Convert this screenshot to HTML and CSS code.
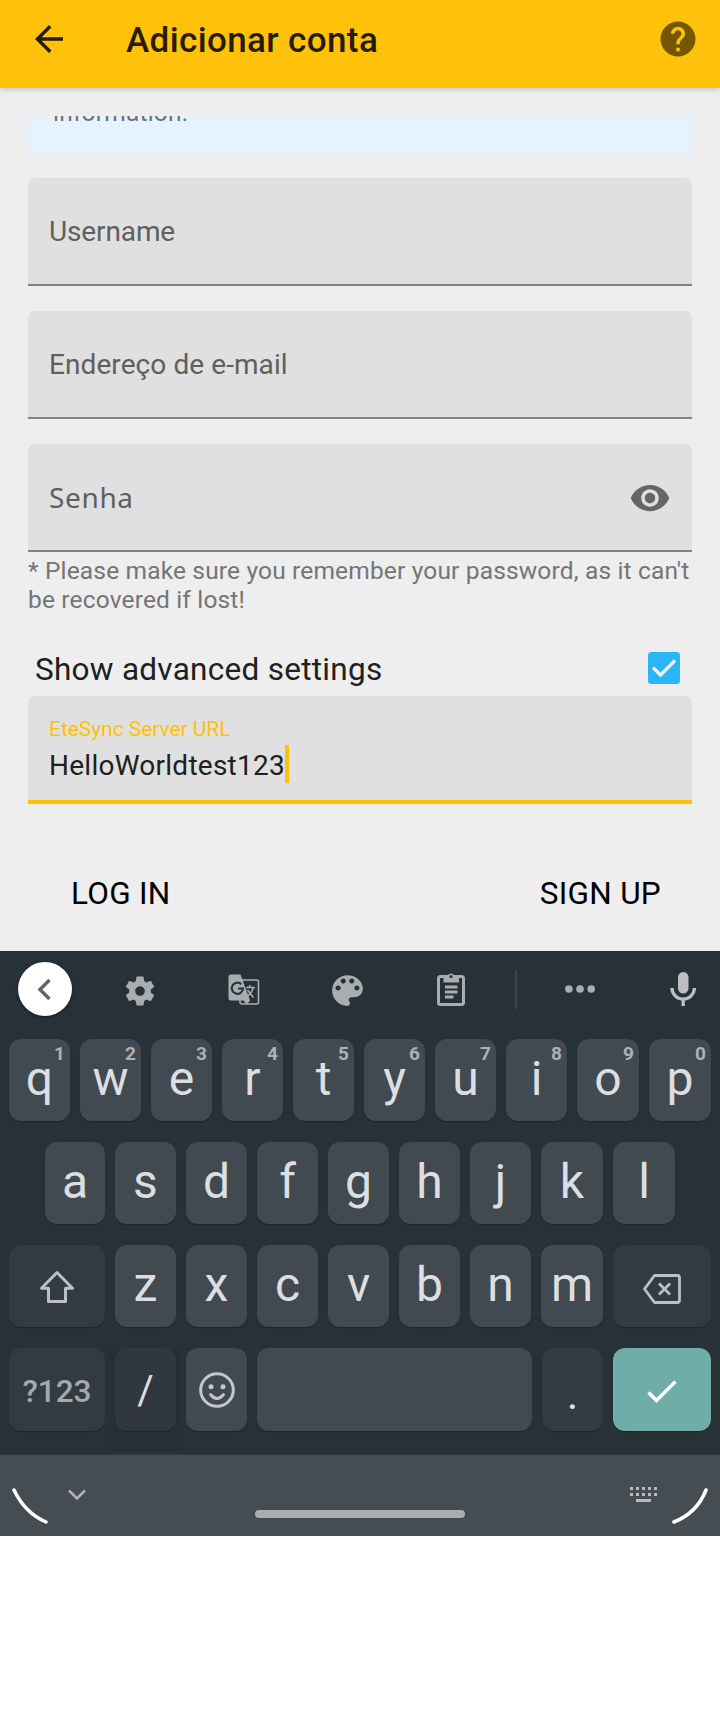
FILE: index.html
```html
<!DOCTYPE html>
<html lang="pt">
<head>
<meta charset="utf-8">
<title>Adicionar conta</title>
<link rel="stylesheet" href="styles.css">
</head>
<body>
<header class="appbar">
  <svg class="back" viewBox="0 0 24 24"><path d="M20 11H7.83l5.59-5.59L12 4l-8 8 8 8 1.41-1.41L7.83 13H20v-2z"/></svg>
  <h1 class="title">Adicionar conta</h1>
  <svg class="help" viewBox="0 0 24 24"><path d="M12 2C6.48 2 2 6.48 2 12s4.48 10 10 10 10-4.48 10-10S17.52 2 12 2zm1 17h-2v-2h2v2zm2.07-7.75l-.9.92C13.45 12.9 13 13.5 13 15h-2v-.5c0-1.1.45-2.1 1.17-2.83l1.24-1.26c.37-.36.59-.86.59-1.41 0-1.1-.9-2-2-2s-2 .9-2 2H8c0-2.21 1.79-4 4-4s4 1.79 4 4c0 .88-.36 1.68-.93 2.25z"/></svg>
</header>
<main class="form">
  <div class="info"><p class="info-text">information.</p></div>
  <div class="field"><span class="hint">Username</span></div>
  <div class="field"><span class="hint email">Endereço de e-mail</span></div>
  <div class="field"><span class="hint noto">Senha</span>
    <svg class="eye" viewBox="0 0 24 24"><path d="M12 4.5C7 4.5 2.73 7.61 1 12c1.73 4.39 6 7.5 11 7.5s9.27-3.11 11-7.5c-1.73-4.39-6-7.5-11-7.5zM12 17c-2.76 0-5-2.24-5-5s2.24-5 5-5 5 2.24 5 5-2.24 5-5 5zm0-8c-1.66 0-3 1.34-3 3s1.34 3 3 3 3-1.34 3-3-1.34-3-3-3z"/></svg>
  </div>
  <p class="note">* Please make sure you remember your password, as it can't<br>be recovered if lost!</p>
  <div class="advanced"><span class="adv-label">Show advanced settings</span>
    <svg class="checkbox" viewBox="0 0 32 32"><rect width="32" height="32" rx="3.5" fill="#29b6f6"/><path d="M5 15.500l7.500 7.500L27 8.500" fill="none" stroke="#eee" stroke-width="3.400"/></svg>
  </div>
  <div class="field active">
    <span class="label">EteSync Server URL</span>
    <span class="value">HelloWorldtest123<i class="caret"></i></span>
  </div>
  <div class="actions"><span class="btn">LOG IN</span><span class="btn">SIGN UP</span></div>
</main>
<section class="keyboard">
  <div class="toolbar">
    <span class="collapse"><svg viewBox="0 0 54 54"><path d="M31.500 18L22 27.500l9.500 9.500" fill="none" stroke="#666" stroke-width="3.500"/></svg></span>
    <svg class="tool gear" viewBox="0 0 24 24"><path d="M19.140 12.940c.04-.3.060-.61.060-.94 0-.32-.02-.64-.07-.94l2.030-1.580c.18-.14.230-.41.120-.61l-1.920-3.320c-.12-.22-.37-.29-.59-.22l-2.390.96c-.5-.38-1.030-.7-1.620-.94l-.36-2.540c-.04-.24-.24-.41-.48-.41h-3.840c-.24 0-.43.170-.47.410l-.36 2.540c-.59.240-1.130.570-1.620.940l-2.390-.96c-.22-.08-.47 0-.59.220L2.740 8.870c-.12.210-.08.470.120.610l2.030 1.580c-.05.3-.09.630-.09.940s.020.640.070.940l-2.030 1.580c-.18.140-.23.410-.12.610l1.920 3.320c.12.220.370.290.590.220l2.390-.96c.5.380 1.030.7 1.620.940l.36 2.540c.05.240.240.410.480.410h3.840c.24 0 .44-.17.470-.41l.36-2.540c.59-.24 1.130-.56 1.620-.94l2.390.96c.22.080.470 0 .59-.22l1.920-3.320c.12-.22.070-.47-.12-.61l-2.010-1.580zM12 15.200c-1.770 0-3.200-1.430-3.200-3.200s1.430-3.200 3.200-3.200 3.200 1.430 3.200 3.200-1.430 3.200-3.200 3.200z"/></svg>
    <svg class="tool translate" viewBox="0 0 32 32"><rect x="12" y="6" width="18.500" height="24" rx="2" fill="none" stroke="#a9adaf" stroke-width="1.600"/><path d="M3 .5h9.500l9.500 26H3a2.500 2.500 0 0 1-2.500-2.500V3A2.500 2.500 0 0 1 3 .5zM15.500 26.500H22l-3.500 4z"/><path d="M13.300 10.200a5.600 5.600 0 1 0 1.700 4.300h-5" fill="none" stroke="#273238" stroke-width="2.100"/><path d="M18 13.500h9M21.700 11v2.500M25.300 13.500c-1 4-3 6.500-6 9M19.500 16l6 7.500" fill="none" stroke="#a9adaf" stroke-width="1.600"/></svg>
    <svg class="tool palette" viewBox="0 0 24 24"><path d="M12 3c-4.970 0-9 4.030-9 9s4.030 9 9 9c.83 0 1.500-.67 1.500-1.500 0-.39-.15-.74-.39-1.010-.23-.26-.38-.61-.38-.99 0-.83.670-1.500 1.500-1.500H16c2.760 0 5-2.240 5-5 0-4.420-4.030-8-9-8zm-5.500 9c-.83 0-1.500-.67-1.500-1.500S5.670 9 6.500 9 8 9.670 8 10.500 7.330 12 6.500 12zm3-4C8.670 8 8 7.330 8 6.500S8.670 5 9.500 5s1.500.67 1.500 1.500S10.330 8 9.500 8zm5 0c-.83 0-1.500-.67-1.500-1.500S13.670 5 14.500 5s1.500.67 1.500 1.500S15.330 8 14.500 8zm3 4c-.83 0-1.500-.67-1.500-1.500S16.670 9 17.500 9s1.500.67 1.500 1.500-.67 1.500-1.500 1.500z"/></svg>
    <svg class="tool clip" viewBox="0 0 28 34"><rect x="1.500" y="4.500" width="25" height="28" rx="2" fill="none" stroke="#a9adaf" stroke-width="3"/><path d="M6.500 4h4a3.700 3.700 0 0 1 7 0h4.500v6.500H6.500zM8 13.500h12.500v3H8zM8 18.500h12.500v3H8zM8 23.500h8.500v3H8z"/><circle cx="14" cy="4.500" r="1.600" fill="#273238"/></svg>
    <i class="divider"></i>
    <svg class="tool dots" viewBox="0 0 30 8"><circle cx="3.900" cy="4" r="3.800"/><circle cx="15" cy="4" r="3.800"/><circle cx="26.200" cy="4" r="3.800"/></svg>
    <svg class="tool mic" viewBox="0 0 26 34"><rect x="8" y="0" width="10.500" height="21.500" rx="5.200"/><path d="M2 16a11.200 11.200 0 0 0 22.400 0M13.200 27v7" fill="none" stroke="#bcc0c2" stroke-width="3.300"/></svg>
  </div>
  <div class="row">
    <span class="key">q<sup>1</sup></span><span class="key">w<sup>2</sup></span><span class="key">e<sup>3</sup></span><span class="key">r<sup>4</sup></span><span class="key">t<sup>5</sup></span><span class="key">y<sup>6</sup></span><span class="key">u<sup>7</sup></span><span class="key">i<sup>8</sup></span><span class="key">o<sup>9</sup></span><span class="key">p<sup>0</sup></span>
  </div>
  <div class="row home">
    <span class="key">a</span><span class="key">s</span><span class="key">d</span><span class="key">f</span><span class="key">g</span><span class="key">h</span><span class="key">j</span><span class="key">k</span><span class="key">l</span>
  </div>
  <div class="row edge">
    <span class="key dark"><svg class="shift" viewBox="0 0 36 34"><path d="M18 2.500L2.500 18.200h7V31.500h17V18.200h7z" fill="none" stroke="#bcc0c2" stroke-width="3" stroke-linejoin="round"/></svg></span>
    <span class="key">z</span><span class="key">x</span><span class="key">c</span><span class="key">v</span><span class="key">b</span><span class="key">n</span><span class="key">m</span>
    <span class="key dark"><svg class="bksp" viewBox="0 0 40 32"><path d="M12.500 2.500H35.500a2 2 0 0 1 2 2v23a2 2 0 0 1-2 2H12.500L2.500 16zM17 10.500l11 11M28 10.500l-11 11" fill="none" stroke="#bcc0c2" stroke-width="2.800" stroke-linejoin="round"/></svg></span>
  </div>
  <div class="row bottom">
    <span class="key dark sym">?123</span>
    <span class="slot"><span class="key slash">/</span></span>
    <span class="key"><svg class="smile" viewBox="0 0 36 36"><circle cx="18" cy="18" r="16.300" fill="none" stroke="#c4c7ca" stroke-width="3"/><circle cx="12" cy="14.800" r="2.500"/><circle cx="24" cy="14.800" r="2.500"/><path d="M11.500 22.500q6.500 8 13 0" fill="none" stroke="#c4c7ca" stroke-width="2.800" stroke-linecap="round"/></svg></span>
    <span class="key space"></span>
    <span class="key dark dot">.</span>
    <span class="key enter"><svg viewBox="0 0 32 24"><path d="M2.500 13.500l8 8L29.500 2.500" fill="none" stroke="#fff" stroke-width="3.500"/></svg></span>
  </div>
</section>
<footer class="nav">
  <svg class="arc" viewBox="0 0 36 36"><path d="M2 2Q13 25 34 34" /></svg>
  <svg class="down" viewBox="0 0 18 12"><path d="M1 1.500l8 8 8-8"/></svg>
  <i class="pill"></i>
  <svg class="kbd" viewBox="0 0 27 15"><path d="M0 1.500h27M0 7.500h27" stroke-dasharray="3 3"/><path d="M6 13.500h15"/></svg>
  <svg class="arc" viewBox="0 0 36 36"><path d="M34 2Q25 25 2 34"/></svg>
</footer>
</body>
</html>
```

FILE: styles.css
```css
* { box-sizing: border-box; }
body { margin: 0; background: #fff; font-family: Roboto, sans-serif; width: 720px; }
h1, p { margin: 0; }
svg { display: block; flex: none; }

.appbar { height: 88px; background: #ffc109; display: flex; align-items: center; padding: 0 21px 10px 28px; position: relative; box-shadow: 0 1px 6px rgba(0,0,0,.2); }
.back { width: 42px; height: 42px; fill: #251c01; }
.title { margin-left: 56px; padding-top: 4px; font-size: 35px; line-height: 40px; font-weight: 500; color: #251c01; flex: 1; letter-spacing: .38px; }
.help { width: 42px; height: 42px; fill: #735703; }

.form { height: 863px; background: #eee; padding: 28px 28px 0; }
.info { height: 37px; background: #e6f3fd; overflow: hidden; padding-left: 25px; margin-bottom: 25px; }
.info-text { margin-top: -18px; font-size: 24.5px; line-height: 29px; color: #6e7276; letter-spacing: .2px; }
.field { height: 108px; background: #e0e0e0; border-bottom: 2px solid #828282; border-radius: 7px 7px 0 0; margin-bottom: 25px; padding: 0 21px; display: flex; align-items: center; justify-content: space-between; }
.hint { font-size: 28px; line-height: 34px; color: #5f5f5f; padding-top: 2px; letter-spacing: -.12px; }
.email { letter-spacing: .08px; }
.noto { font-family: "Noto Sans", sans-serif; padding: 0 0 1px; letter-spacing: .65px; }
.eye { width: 42px; height: 42px; margin-top: 2px; fill: #666; }
.note { margin-top: -21px; font-size: 24.5px; line-height: 29px; color: #757575; white-space: nowrap; letter-spacing: .16px; }
.advanced { height: 82px; display: flex; align-items: flex-start; justify-content: space-between; padding: 38px 12px 0 7px; }
.adv-label { font-size: 31.5px; line-height: 36px; color: #202020; letter-spacing: .28px; }
.checkbox { width: 32px; height: 32px; }
.active { flex-direction: column; align-items: flex-start; justify-content: flex-start; border-bottom: 4px solid #ffc107; padding-top: 20px; margin: 0; }
.label { font-size: 21px; line-height: 26px; color: #ffc107; letter-spacing: -.05px; }
.value { display: flex; font-size: 28px; line-height: 42px; color: #202020; letter-spacing: .25px; margin-top: 3px; }
.caret { width: 4px; height: 38px; background: #ffc107; }
.actions { display: flex; justify-content: space-between; padding: 72px 31px 0 43px; }
.btn { font-size: 31.5px; line-height: 36px; color: #000; letter-spacing: .28px; }

.keyboard { height: 503px; background: #273238; display: flex; flex-direction: column; gap: 21px; padding: 0 9px; }
.toolbar { height: 67px; display: flex; align-items: center; padding: 9px 0 0 9px; }
.tool { fill: #a9adaf; }
.collapse { width: 54px; height: 54px; border-radius: 50%; background: #fff; margin-top: -1px; box-shadow: 0 1px 3px rgba(0,0,0,.5); }
.gear { width: 36px; height: 36px; margin-left: 50px; margin-top: 4px; }
.translate { width: 32px; height: 32px; margin-left: 70px; margin-top: 2px; }
.palette { width: 41px; height: 41px; margin-left: 67px; margin-top: 2px; }
.clip { width: 28px; height: 34px; margin-left: 69px; margin-top: 0; }
.divider { width: 2px; height: 39px; background: #3c464c; margin-left: 50px; }
.dots { width: 30px; height: 8px; margin-left: 48px; margin-top: 0; }
.mic { width: 26px; height: 34px; margin-left: 75px; fill: #bcc0c2; margin-top: 0; }
.row { display: grid; grid-template-columns: repeat(8, 61px) 62px 62px; column-gap: 10px; height: 82px; flex: none; }
.home { padding-left: 36px; grid-template-columns: 60px repeat(6, 61px) 62px 62px; }
.edge { grid-template-columns: 96px repeat(6, 61px) 62px 98px; }
.bottom { grid-template-columns: 96px 61px 61px 275px 61px 98px; height: 83px; }
.key { position: relative; display: flex; align-items: center; justify-content: center; height: 100%; border-radius: 12px; background: #424a51; color: #dcdee0; font-size: 48px; line-height: 56px; padding-bottom: 2px; box-shadow: 0 1px 1px #1c262b; }
.key sup { position: absolute; top: 3px; right: 5px; font-size: 19px; line-height: 24px; font-weight: 700; color: #adb1b4; }
.dark { background: #313b41; }
.sym { font-size: 31.5px; font-weight: 500; color: #a5a9ac; padding: 4px 0 0; }
.slot { background: #262f33; margin: 0 -5px -21px; padding: 0 5px 21px; }
.slash { background: #30373e; font-size: 40px; padding: 3px 0 0; }
.dot { font-size: 44px; padding: 8px 0 0; }
.enter { background: #6fada8; padding: 2px 0 0; }
.enter svg { width: 32px; height: 24px; }
.shift { width: 36px; height: 34px; margin-top: 3px; }
.bksp { width: 40px; height: 32px; margin-top: 7px; }
.smile { width: 36px; height: 36px; margin-top: 2px; fill: #c4c7ca; }

.nav { height: 82px; background: #454d52; border-top: 1px solid #34393b; display: flex; align-items: flex-start; padding: 0 12px; }
.arc { width: 36px; height: 36px; margin-top: 33px; fill: none; stroke: #fff; stroke-width: 3.5; stroke-linecap: round; }
.down { width: 18px; height: 12px; margin: 34px 0 0 20px; fill: none; stroke: #b0b3b6; stroke-width: 2.5; }
.pill { width: 210px; height: 8px; border-radius: 4px; background: #a9adb0; margin: 55px 0 0 169px; }
.kbd { width: 27px; height: 15px; margin: 32px 15px 0 165px; fill: none; stroke: #b8bbbd; stroke-width: 3; }
```
